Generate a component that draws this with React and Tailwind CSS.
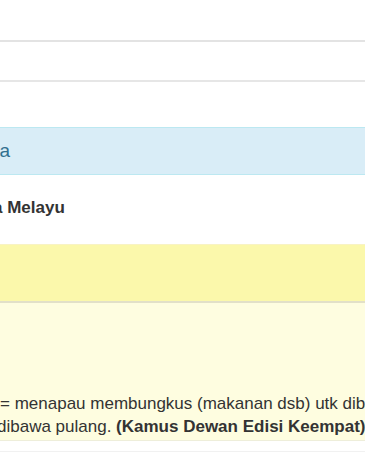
import React from "react";

const font = { fontFamily: '"Liberation Sans", Arial, sans-serif' };

export default function App() {
  return (
    <div className="w-[365px] h-[456px] overflow-hidden bg-white text-[#333]" style={font}>
      <div className="h-[40px]" />
      <div className="h-[2px] bg-[#e3e3e3]" />
      <div className="h-[38px]" />
      <div className="h-[2px] bg-[#e6e6e6]" />
      <div className="h-[45px]" />

      {/* panel heading (info) */}
      <div className="h-[48px] bg-[#d9edf7] border-y border-[#bce8f1] flex items-center overflow-hidden">
        <div className="-ml-[47px] text-[19px] text-[#31708f] whitespace-nowrap">Makna</div>
      </div>

      <div className="h-[69px] pt-[20px] overflow-hidden">
        <div className="-ml-[58px] text-[17px] font-bold whitespace-nowrap">Bahasa Melayu</div>
      </div>

      {/* panel heading (warning) */}
      <div className="h-[57px] bg-[#fbf8ab] border-t border-[#f8f3c4]" />
      <div className="h-[2px] bg-[#e2e0c8]" />

      <div className="h-[137px] bg-[#fefde0] overflow-hidden flex flex-col justify-end pb-[2px]">
        <p className="text-[17px] leading-[23px] whitespace-nowrap">
          = menapau membungkus (makanan dsb) utk dibawa
        </p>
        <p className="-ml-[3px] text-[17px] leading-[23px] whitespace-nowrap">
          dibawa pulang. <b>(Kamus Dewan Edisi Keempat)</b>
        </p>
      </div>
      <div className="h-[1px] bg-[#eeeeda]" />
      <div className="h-[10px] bg-white" />
      <div className="h-[1px] bg-[#f1f1f1]" />
    </div>
  );
}
